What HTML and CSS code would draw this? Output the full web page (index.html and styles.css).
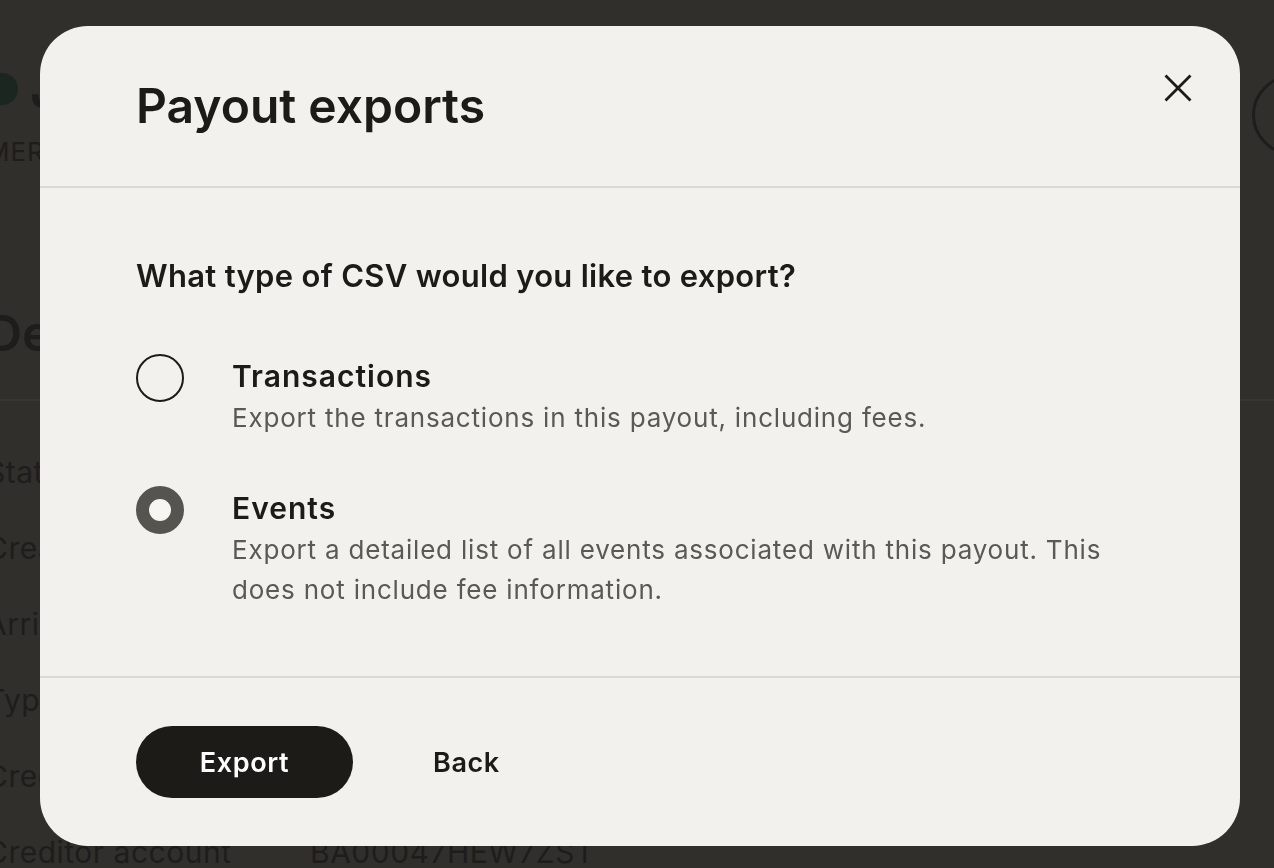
FILE: index.html
```html
<!DOCTYPE html>
<html lang="en">
<head>
<meta charset="utf-8">
<title>Payout exports</title>
<link rel="stylesheet" href="styles.css">
</head>
<body>
<div class="page">
  <div class="page-head">
    <div class="title-row">
      <span class="status-dot"></span>
      <span class="page-name">Jun 2024</span>
    </div>
    <span class="round-btn"></span>
  </div>
  <div class="page-label">MERCHANT</div>
  <h2 class="page-section">Details</h2>
  <div class="rows">
    <div class="row"><span class="key">Status</span><span class="val">Paid</span></div>
    <div class="row"><span class="key">Created</span><span class="val">12 Jun 2024</span></div>
    <div class="row"><span class="key">Arrival</span><span class="val">14 Jun 2024</span></div>
    <div class="row"><span class="key">Type</span><span class="val">Merchant</span></div>
    <div class="row"><span class="key">Creditor</span><span class="val">CR000123</span></div>
    <div class="row"><span class="key">Creditor account</span><span class="val">BA00047HEW7ZST</span></div>
  </div>
</div>

<div class="overlay">
  <div class="modal" role="dialog" aria-labelledby="modal-title">
    <div class="modal-header">
      <h1 id="modal-title" class="modal-title">Payout exports</h1>
      <button class="close-btn" aria-label="Close">
        <svg width="28" height="28" viewBox="0 0 28 28" fill="none" stroke="#1c1b18" stroke-width="2.8" stroke-linecap="square">
          <path d="M2.5 2.5 L25.5 25.5 M25.5 2.5 L2.5 25.5"/>
        </svg>
      </button>
    </div>
    <div class="modal-body">
      <p class="question">What type of CSV would you like to export?</p>
      <div class="options">
        <label class="option">
          <span class="radio"></span>
          <span class="option-text">
            <span class="option-title">Transactions</span>
            <span class="option-desc">Export the transactions in this payout, including fees.</span>
          </span>
        </label>
        <label class="option">
          <span class="radio radio-checked"></span>
          <span class="option-text">
            <span class="option-title">Events</span>
            <span class="option-desc">Export a detailed list of all events associated with this payout. This does not include fee information.</span>
          </span>
        </label>
      </div>
    </div>
    <div class="modal-footer">
      <button class="btn-primary">Export</button>
      <button class="btn-link">Back</button>
    </div>
  </div>
</div>
</body>
</html>
```

FILE: styles.css
```css
* { box-sizing: border-box; }

html, body {
  margin: 0;
  padding: 0;
  height: 100%;
}

body {
  background: #302f2c;
  font-family: Inter, "Noto Sans", sans-serif;
  color: #1e1d1b;
  overflow: hidden;
}

/* underlying (dimmed) page */
.page {
  margin-left: -14px;
  padding-top: 56px;
}

.page-head {
  display: flex;
  justify-content: space-between;
  align-items: center;
  height: 66px;
}

.title-row {
  display: flex;
  align-items: center;
  gap: 12px;
}

.status-dot {
  width: 32px;
  height: 32px;
  border-radius: 50%;
  background: #1c2620;
}

.page-name {
  font-size: 52px;
  font-weight: 600;
  color: #1e1d1b;
}

.round-btn {
  align-self: flex-start;
  margin-top: 19px;
  width: 80px;
  height: 80px;
  border-radius: 50%;
  border: 3px solid #1e1d1b;
  margin-right: -58px;
}

.page-label {
  margin-top: 14px;
  font-size: 26px;
  letter-spacing: 1px;
  color: #1e1d1b;
}

.page-section {
  margin: 136px 0 0;
  font-size: 50px;
  font-weight: 600;
  line-height: 60px;
  color: #1e1d1b;
  padding-bottom: 36px;
  border-bottom: 2px solid #363532;
}

.rows {
  padding-top: 33px;
  display: flex;
  flex-direction: column;
}

.row {
  display: flex;
  height: 76px;
  align-items: center;
  font-size: 30px;
  letter-spacing: 0.5px;
  color: #1e1d1b;
}

.key { width: 324px; }

/* modal */
.overlay {
  position: fixed;
  inset: 0;
  display: flex;
  justify-content: flex-start;
  align-items: flex-start;
  padding: 26px 0 0 40px;
}

.modal {
  width: 1200px;
  height: 820px;
  background: #f2f1ee;
  border-radius: 48px;
  display: flex;
  flex-direction: column;
  overflow: hidden;
}

.modal-header {
  height: 162px;
  border-bottom: 2px solid #dcdad5;
  display: flex;
  justify-content: space-between;
  align-items: flex-start;
  padding: 0 40px 0 96px;
}

.modal-title {
  margin: 52px 0 0;
  font-size: 48px;
  font-weight: 600;
  letter-spacing: 0;
  line-height: 56px;
  color: #1c1b18;
}

.close-btn {
  margin-top: 40px;
  width: 44px;
  height: 44px;
  border: 0;
  padding: 0;
  background: transparent;
  display: flex;
  align-items: center;
  justify-content: center;
}

.modal-body {
  flex: 1;
  padding: 68px 96px 0;
  border-bottom: 2px solid #dcdad5;
}

.question {
  margin: 0;
  font-size: 31px;
  font-weight: 600;
  letter-spacing: 0.3px;
  line-height: 40px;
  color: #1c1b18;
}

.options {
  margin-top: 58px;
  display: flex;
  flex-direction: column;
  gap: 48px;
}

.option {
  display: flex;
  gap: 48px;
  align-items: flex-start;
}

.radio {
  flex: none;
  width: 48px;
  height: 48px;
  border-radius: 50%;
  border: 2px solid #1c1b18;
}

.radio-checked {
  border: 13px solid #56544e;
  background: #f7f6f3;
}

.option-text {
  display: flex;
  flex-direction: column;
  max-width: 880px;
  padding-top: 2px;
}

.option-title {
  font-size: 30px;
  font-weight: 600;
  letter-spacing: 1px;
  line-height: 40px;
  color: #1c1b18;
}

.option-desc {
  font-size: 26px;
  line-height: 40px;
  letter-spacing: 0.8px;
  color: #5b5954;
  padding-top: 2px;
}

.modal-footer {
  height: 168px;
  display: flex;
  align-items: center;
  gap: 80px;
  padding: 0 96px;
}

.btn-primary {
  width: 217px;
  height: 72px;
  border-radius: 36px;
  border: 0;
  background: #1c1b18;
  color: #ffffff;
  font-family: Inter, "Noto Sans", sans-serif;
  font-size: 27px;
  font-weight: 600;
  letter-spacing: 0.6px;
}

.btn-link {
  border: 0;
  padding: 0;
  background: transparent;
  color: #1c1b18;
  font-family: Inter, "Noto Sans", sans-serif;
  font-size: 27px;
  font-weight: 600;
  letter-spacing: 0.6px;
}
```
